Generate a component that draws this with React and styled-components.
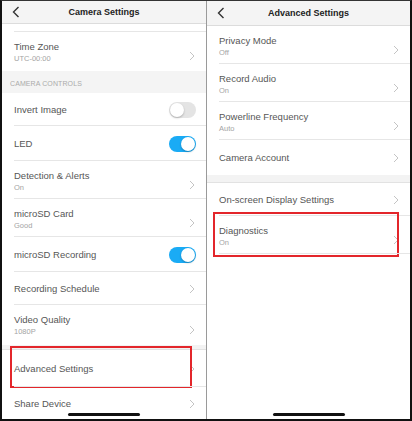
import React from 'react'
import styled, { createGlobalStyle } from 'styled-components'

const GlobalStyle = createGlobalStyle`
  html, body {
    margin: 0;
    padding: 0;
    background: #fff;
  }
  body {
    font-family: "Liberation Sans", Arial, sans-serif;
  }
`

const Frame = styled.div`
  width: 412px;
  height: 421px;
  box-sizing: border-box;
  display: flex;
  border: 2px solid #111;
  border-top: 1px solid #333;
  background: #fff;
  overflow: hidden;
`

const Panel = styled.div`
  position: relative;
  width: ${p => p.$w}px;
  flex-shrink: 0;
  display: flex;
  flex-direction: column;
  overflow: hidden;
  background: #fff;
`

const Divider = styled.div`
  width: 1px;
  flex-shrink: 0;
  background: #9a9a9a;
`

const Header = styled.div`
  height: ${p => p.$h}px;
  flex-shrink: 0;
  box-sizing: border-box;
  display: grid;
  grid-template-columns: 30px 1fr 30px;
  align-items: center;
  background: #f4f4f4;
  border-bottom: 1px solid #dcdcdc;
`

const BackBtn = styled.div`
  display: flex;
  align-items: center;
  padding-left: 10px;
`

const Title = styled.div`
  text-align: center;
  font-size: 9px;
  font-weight: 700;
  color: #222;
`

const Row = styled.div`
  position: relative;
  height: ${p => p.$h}px;
  flex-shrink: 0;
  box-sizing: border-box;
  display: flex;
  align-items: ${p => (p.$two ? 'flex-start' : 'center')};
  padding: ${p => (p.$two ? '9px 10px 0 12px' : '0 10px 0 12px')};
  &::after {
    content: '';
    position: absolute;
    left: 12px;
    right: 0;
    bottom: 0;
    height: 1px;
    background: ${p => (p.$noLine ? 'transparent' : '#e6e6e6')};
  }
`

const Texts = styled.div`
  flex: 1;
  display: flex;
  flex-direction: column;
`

const Label = styled.div`
  font-size: 9.5px;
  line-height: 12px;
  color: #565656;
`

const Sub = styled.div`
  margin-top: 1px;
  font-size: 7.5px;
  line-height: 10px;
  color: #a4a4a4;
`

const Chevron = styled.svg`
  width: 6px;
  height: 10px;
  flex-shrink: 0;
  align-self: center;
  margin-right: 1px;
`

const Toggle = styled.div`
  position: relative;
  width: 27px;
  height: 16px;
  border-radius: 8px;
  box-sizing: border-box;
  flex-shrink: 0;
  background: ${p => (p.$on ? '#1aabf5' : '#e4e4e4')};
  &::after {
    content: '';
    position: absolute;
    top: 1px;
    left: ${p => (p.$on ? '12px' : '1px')};
    width: 14px;
    height: 14px;
    border-radius: 50%;
    background: #fff;
    box-shadow: 0 1px 2px rgba(0, 0, 0, 0.25);
  }
`

const SectionHead = styled.div`
  height: ${p => p.$h}px;
  flex-shrink: 0;
  box-sizing: border-box;
  display: flex;
  align-items: center;
  padding-left: 8px;
  padding-top: 2px;
  background: #f4f4f4;
  font-size: 7px;
  letter-spacing: 0.1px;
  color: #ababab;
`

const Gap = styled.div`
  height: ${p => p.$h}px;
  flex-shrink: 0;
  box-sizing: border-box;
  background: #f3f3f3;
  border-bottom: 1px solid #e2e2e2;
`

const Highlight = styled.div`
  position: absolute;
  top: ${p => p.$t}px;
  bottom: ${p => p.$b}px;
  left: ${p => p.$l}px;
  right: ${p => p.$r}px;
  border: 2px solid #e3262b;
  pointer-events: none;
`

const HomeBar = styled.div`
  position: absolute;
  bottom: 3px;
  left: 50%;
  width: 72px;
  height: 3px;
  margin-left: -36px;
  border-radius: 2px;
  background: #111;
`

const Arrow = () => (
  <Chevron viewBox="0 0 6 10">
    <polyline points="1,1 5,5 1,9" fill="none" stroke="#c4c4c4" strokeWidth="1" />
  </Chevron>
)

const Back = () => (
  <BackBtn>
    <svg width="8" height="12" viewBox="0 0 8 12">
      <polyline points="6.5,1 1.5,6 6.5,11" fill="none" stroke="#333" strokeWidth="1.4" />
    </svg>
  </BackBtn>
)

function Item({ label, sub, h, toggle, box, noLine }) {
  return (
    <Row $h={h} $two={!!sub} $noLine={noLine}>
      <Texts>
        <Label>{label}</Label>
        {sub && <Sub>{sub}</Sub>}
      </Texts>
      {toggle === undefined ? <Arrow /> : <Toggle $on={toggle} />}
      {box && <Highlight $t={box[0]} $r={box[1]} $b={box[2]} $l={box[3]} />}
    </Row>
  )
}

export default function App() {
  return (
    <>
      <GlobalStyle />
      <Frame>
        <Panel $w={204}>
          <Header $h={23}>
            <Back />
            <Title>Camera Settings</Title>
          </Header>
          <Row $h={8} />
          <Item label="Time Zone" sub="UTC-00:00" h={39} noLine />
          <SectionHead $h={22}>CAMERA CONTROLS</SectionHead>
          <Item label="Invert Image" h={33} toggle={false} />
          <Item label="LED" h={35} toggle={true} />
          <Item label="Detection & Alerts" sub="On" h={38} />
          <Item label="microSD Card" sub="Good" h={38} />
          <Item label="microSD Recording" h={35} toggle={true} />
          <Item label="Recording Schedule" h={33} />
          <Item label="Video Quality" sub="1080P" h={40} noLine />
          <Gap $h={5} />
          <Item label="Advanced Settings" h={37} box={[-4, 14, -1, 8]} />
          <Item label="Share Device" h={33} />
          <HomeBar />
        </Panel>
        <Divider />
        <Panel $w={203}>
          <Header $h={25}>
            <Back />
            <Title>Advanced Settings</Title>
          </Header>
          <Item label="Privacy Mode" sub="Off" h={38} />
          <Item label="Record Audio" sub="On" h={38} />
          <Item label="Powerline Frequency" sub="Auto" h={38} />
          <Item label="Camera Account" h={35} noLine />
          <Gap $h={8} />
          <Item label="On-screen Display Settings" h={33} />
          <Item label="Diagnostics" sub="On" h={38} box={[-4, 11, -3, 6]} />
          <HomeBar />
        </Panel>
      </Frame>
    </>
  )
}
